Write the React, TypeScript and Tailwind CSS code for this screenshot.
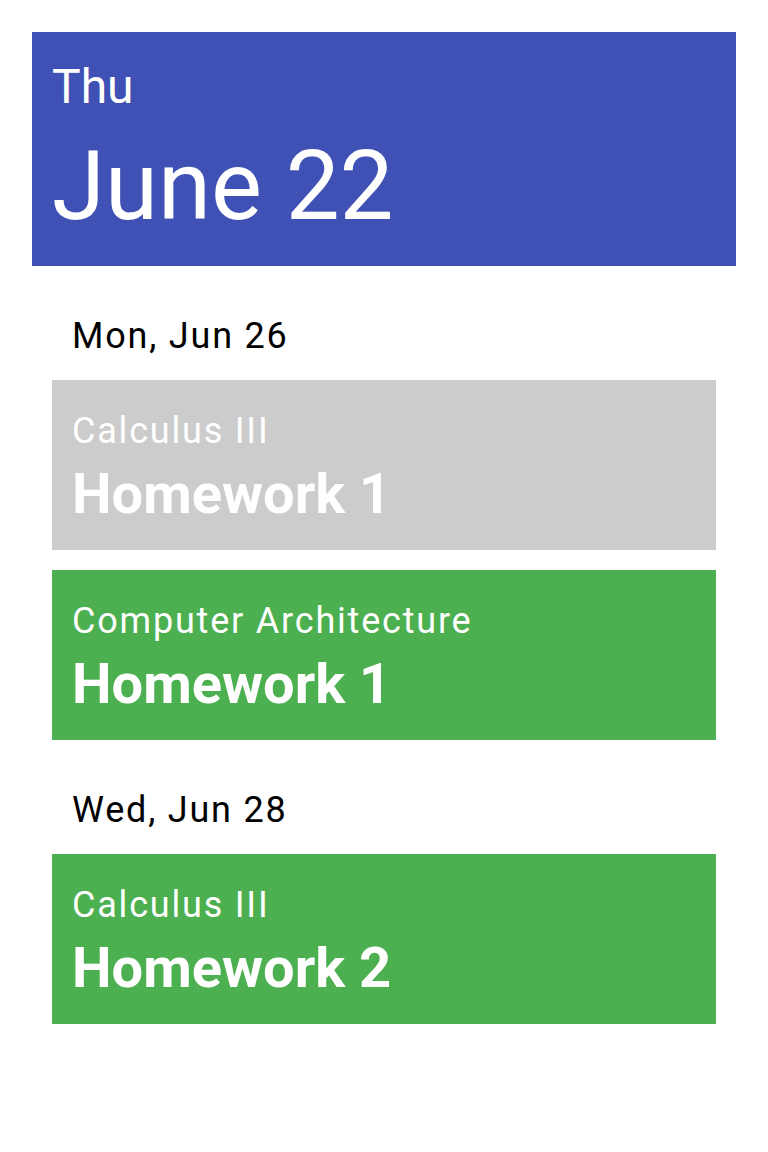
import React from 'react';

type Task = { course: string; title: string; done?: boolean };
type Day = { label: string; tasks: Task[] };

const days: Day[] = [
  {
    label: 'Mon, Jun 26',
    tasks: [
      { course: 'Calculus III', title: 'Homework 1', done: true },
      { course: 'Computer Architecture', title: 'Homework 1' },
    ],
  },
  {
    label: 'Wed, Jun 28',
    tasks: [{ course: 'Calculus III', title: 'Homework 2' }],
  },
];

function TaskCard({ task }: { task: Task }) {
  return (
    <div
      className={`flex h-[170px] flex-col px-5 pt-[33px] text-white ${
        task.done ? 'bg-[#cccccc]' : 'bg-[#4caf50]'
      }`}
    >
      <div className="text-[36px] leading-[36px] tracking-[0.05em]">{task.course}</div>
      <div className="mt-[17px] text-[56px] font-bold leading-[56px]">{task.title}</div>
    </div>
  );
}

export default function App() {
  return (
    <div className="min-h-[1152px] bg-white p-8 font-['Roboto',sans-serif]">
      {/* Header */}
      <div className="flex flex-col bg-[#3f51b5] px-5 pb-8 pt-[31px] text-white">
        <div className="text-[48px] leading-[48px]">Thu</div>
        <div className="mt-[27px] text-[96px] leading-[96px]">June 22</div>
      </div>

      {/* Agenda */}
      <div className="flex flex-col px-5">
        {days.map((day) => (
          <div key={day.label} className="flex flex-col">
            <div className="mb-[26px] mt-[52px] px-5 text-[36px] leading-[36px] tracking-[0.05em] text-black">
              {day.label}
            </div>
            <div className="flex flex-col gap-5">
              {day.tasks.map((task, idx) => (
                <TaskCard key={idx} task={task} />
              ))}
            </div>
          </div>
        ))}
      </div>
    </div>
  );
}
